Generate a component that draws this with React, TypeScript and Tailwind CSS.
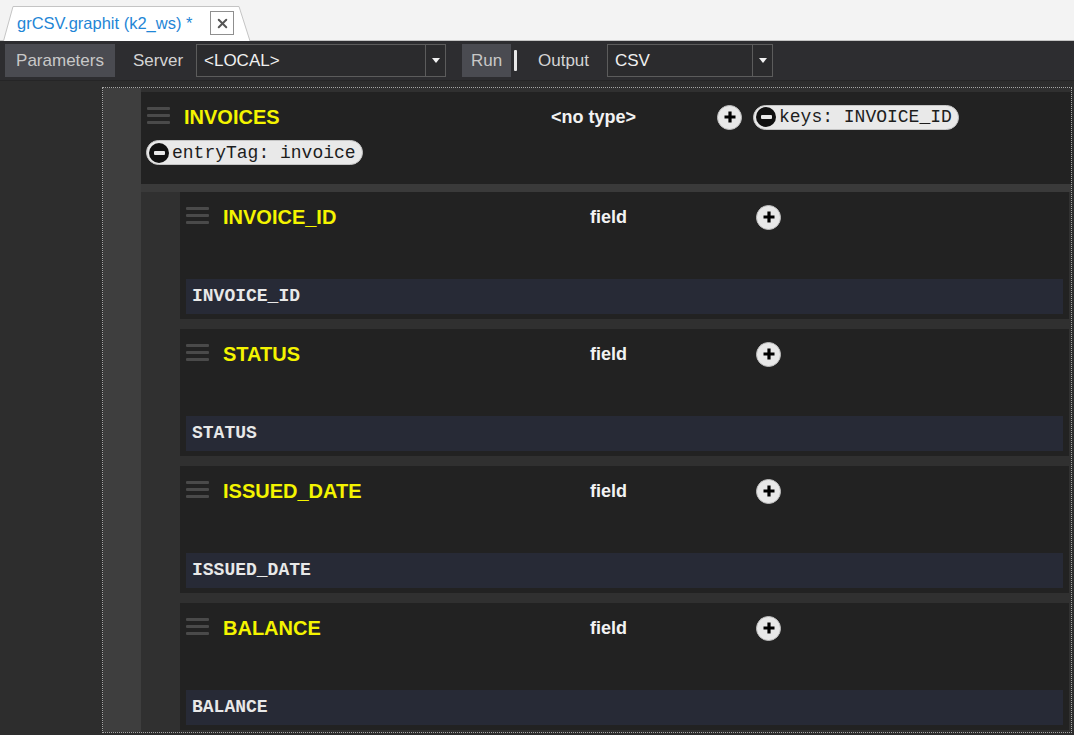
import React from 'react';
import { X } from 'lucide-react';

const fields = ['INVOICE_ID', 'STATUS', 'ISSUED_DATE', 'BALANCE'];

function Grip() {
  return (
    <div className="flex flex-col gap-[4px] w-[23px] -mt-[4px]">
      <div className="h-[3px] rounded-[1px] bg-[#4a4a4a]" />
      <div className="h-[3px] rounded-[1px] bg-[#4a4a4a]" />
      <div className="h-[3px] rounded-[1px] bg-[#4a4a4a]" />
    </div>
  );
}

function PlusDot() {
  return (
    <div className="w-[25px] h-[25px] rounded-full bg-[#e8e8e8] border border-[#bdbdbd] flex items-center justify-center">
      <svg width="14" height="14" viewBox="0 0 14 14">
        <path d="M7 1.5v11M1.5 7h11" stroke="#000" strokeWidth="3.2" />
      </svg>
    </div>
  );
}

function MinusDot() {
  return (
    <div className="w-[20px] h-[20px] rounded-full bg-[#111] flex items-center justify-center">
      <div className="w-[11px] h-[4px] bg-[#e8e8e8] rounded-[1px]" />
    </div>
  );
}

function Pill({ label }: { label: string }) {
  return (
    <div className="h-[25px] rounded-full bg-[#e9e9e9] border border-[#c4c4c4] flex items-center pl-[2px] pr-[6px] gap-[3px] font-['Liberation_Mono',monospace] text-[18px] text-[#1d1d1d] leading-none">
      <MinusDot />
      <span>{label}</span>
    </div>
  );
}

function Select({ value, width }: { value: string; width: string }) {
  return (
    <div className={`${width} h-[33px] flex border border-[#5c5c5c] bg-[#2b2b2d]`}>
      <div className="flex-1 flex items-center pl-[7px] text-[#f0f0f0]">{value}</div>
      <div className="w-[20px] border-l border-[#5c5c5c] flex items-center justify-center">
        <svg width="8" height="5" viewBox="0 0 8 5">
          <path d="M0 0h8L4 5z" fill="#f2f2f2" />
        </svg>
      </div>
    </div>
  );
}

function FieldCard({ name }: { name: string }) {
  return (
    <div className="h-[127px] mb-[10px] bg-[#222222] flex flex-col">
      <div className="h-[50px] shrink-0 grid grid-cols-[43px_367px_166px_auto] items-center">
        <div className="pl-[6px]"><Grip /></div>
        <div className="text-[20px] font-bold text-[#f4f400]">{name}</div>
        <div className="text-[18px] font-bold text-[#f2f2f2]">field</div>
        <PlusDot />
      </div>
      <div className="mt-auto mx-[6px] mb-[5px] h-[35px] shrink-0 bg-[#272a36] flex items-center pl-[6px] font-['Liberation_Mono',monospace] font-bold text-[18px] text-[#e8e8e8]">
        {name}
      </div>
    </div>
  );
}

export default function App() {
  return (
    <div className="w-[1074px] h-[735px] overflow-hidden bg-[#2d2d2d] font-['Liberation_Sans',Arial,sans-serif] flex flex-col">
      {/* tab strip */}
      <div className="h-[41px] shrink-0 bg-[#f3f3f3] border-b border-[#c4c4c4] flex items-end pl-[3px]">
        <div className="relative w-[250px] h-[36px] flex items-center -mb-px">
          <svg className="absolute inset-0" width="250" height="36" viewBox="0 0 250 36">
            <path d="M0.5 36 L10 1.5 L236 1.5 L247 36" fill="#ffffff" stroke="#c4c4c4" />
          </svg>
          <span className="relative ml-[14px] w-[193px] text-[16.5px] text-[#1f86d6]">grCSV.graphit (k2_ws) *</span>
          <div className="relative w-[24px] h-[24px] border border-[#8f8f8f] bg-white flex items-center justify-center">
            <X size={15} strokeWidth={3.2} color="#555" />
          </div>
        </div>
      </div>

      {/* toolbar */}
      <div className="h-[40px] shrink-0 bg-[#2d2d30] border-b border-[#252526] flex items-center px-[5px] text-[17px]">
        <div className="w-[110px] h-[33px] bg-[#4a4b51] flex items-center justify-center text-[#c8c8c8]">Parameters</div>
        <div className="w-[81px] pl-[18px] text-[#d4d4d4]">Server</div>
        <Select value="<LOCAL>" width="w-[250px]" />
        <div className="ml-[16px] w-[49px] h-[33px] bg-[#4a4b51] flex items-center justify-center text-[#c8c8c8]">Run</div>
        <div className="ml-[3px] w-[3px] h-[21px] bg-[#e8e8e8] rounded-[1px]" />
        <div className="w-[90px] pl-[21px] text-[#d4d4d4]">Output</div>
        <Select value="CSV" width="w-[166px]" />
      </div>

      {/* canvas */}
      <div className="flex-1 flex pt-[6px] pl-[102px] pr-[2px]">
        <div className="flex-1 h-[646px] border border-dotted border-[#a6a6a6] flex overflow-hidden">
          <div className="w-[38px] bg-[#3e3e3e]" />
          <div className="flex-1 bg-[#303030] pt-[4px]">
            <div className="bg-[#222222] pb-[19px]">
              <div className="h-[48px] pt-[2px] grid grid-cols-[43px_367px_166px_auto] items-center">
                <div className="pl-[6px]"><Grip /></div>
                <div className="text-[20px] font-bold text-[#f4f400]">INVOICES</div>
                <div className="text-[18px] font-bold text-[#f2f2f2]">&lt;no type&gt;</div>
                <div className="flex items-center">
                  <PlusDot />
                  <div className="ml-[11px]"><Pill label="keys: INVOICE_ID" /></div>
                </div>
              </div>
              <div className="pl-[5px] flex">
                <Pill label="entryTag: invoice" />
              </div>
            </div>
            <div className="h-[8px] bg-[#3a3a3a]" />
            <div className="pl-[39px] pr-[2px]">
              {fields.map((f) => (
                <FieldCard key={f} name={f} />
              ))}
            </div>
          </div>
        </div>
      </div>
    </div>
  );
}
